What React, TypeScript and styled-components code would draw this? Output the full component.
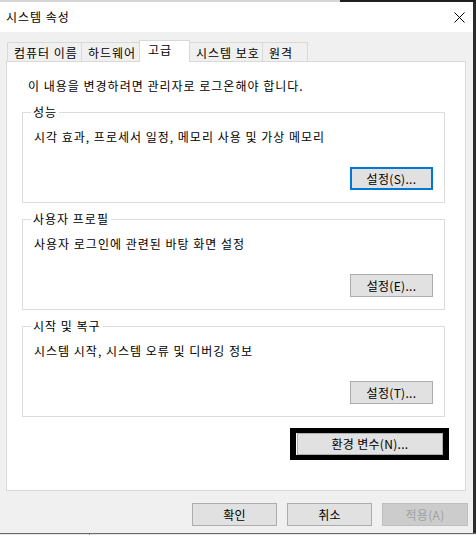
import styled, { createGlobalStyle } from 'styled-components';

const GlobalStyle = createGlobalStyle`
  html, body {
    margin: 0;
    padding: 0;
    background: #2b2b2b;
  }
  body {
    font-family: "Noto Sans CJK KR", "Noto Sans", sans-serif;
    font-size: 12px;
    letter-spacing: 1px;
    color: #000;
  }
  * {
    box-sizing: border-box;
  }
`;

const tabs = [
  { label: '컴퓨터 이름', width: 75 },
  { label: '하드웨어', width: 59 },
  { label: '고급', width: 51, active: true },
  { label: '시스템 보호', width: 74 },
  { label: '원격', width: 46 },
];

const groups = [
  { title: '성능', text: '시각 효과, 프로세서 일정, 메모리 사용 및 가상 메모리', button: '설정(S)...', focused: true },
  { title: '사용자 프로필', text: '사용자 로그인에 관련된 바탕 화면 설정', button: '설정(E)...' },
  { title: '시작 및 복구', text: '시스템 시작, 시스템 오류 및 디버깅 정보', button: '설정(T)...' },
];

const App = () => {
  return (
    <>
      <GlobalStyle />
      <Screen>
        <TopStrip />
        <Middle>
          <Window>
            <TitleBar>
              <span>시스템 속성</span>
              <svg width="11" height="11" viewBox="0 0 11 11">
                <path d="M0.5,0.5 L10.5,10.5 M10.5,0.5 L0.5,10.5" stroke="#000" strokeWidth="1" />
              </svg>
            </TitleBar>
            <Body>
              <TabRow>
                {tabs.map((tab) => (
                  <Tab key={tab.label} $width={tab.width} $active={!!tab.active}>
                    {tab.label}
                  </Tab>
                ))}
              </TabRow>
              <Panel>
                <Notice>이 내용을 변경하려면 관리자로 로그온해야 합니다.</Notice>
                {groups.map((g) => (
                  <Group key={g.title}>
                    <Legend>{g.title}</Legend>
                    <GroupText>{g.text}</GroupText>
                    <GroupFooter>
                      <Button $width={83} $focused={!!g.focused}>{g.button}</Button>
                    </GroupFooter>
                  </Group>
                ))}
                <EnvRow>
                  <EnvFrame>
                    <EnvButton>환경 변수(N)...</EnvButton>
                  </EnvFrame>
                </EnvRow>
              </Panel>
              <Footer>
                <Button $width={85}>확인</Button>
                <Button $width={85}>취소</Button>
                <Button $width={86} disabled>적용(A)</Button>
              </Footer>
            </Body>
          </Window>
          <RightEdge />
        </Middle>
        <BottomStrip />
      </Screen>
    </>
  );
};

const Screen = styled.div`
  width: 476px;
  height: 535px;
  overflow: hidden;
  display: flex;
  flex-direction: column;
  background: #2b2b2b;
`;

const TopStrip = styled.div`
  height: 2px;
  flex: none;
  background: linear-gradient(to right, #d6d6d6 0 340px, #1f1f1f 340px);
`;

const Middle = styled.div`
  display: flex;
  height: 531px;
  flex: none;
`;

const Window = styled.div`
  width: 473px;
  height: 531px;
  display: flex;
  flex-direction: column;
  background: #f0f0f0;
`;

const RightEdge = styled.div`
  flex: 1;
  background: #2b2b2b;
`;

const BottomStrip = styled.div`
  height: 2px;
  flex: none;
  border-top: 1px solid #6a6a6a;
  background: linear-gradient(to right, #e6e6e6 0 89px, #9a9a9a 89px 90px, #e6e6e6 90px);
`;

const TitleBar = styled.div`
  height: 30px;
  flex: none;
  background: #fff;
  display: flex;
  align-items: center;
  justify-content: space-between;
  padding: 0 8px 0 6px;
  line-height: 16px;

  svg {
    display: block;
    margin-top: 1px;
  }
`;

const Body = styled.div`
  flex: 1;
  display: flex;
  flex-direction: column;
  padding: 8px 7px 0 6px;
`;

const TabRow = styled.div`
  display: flex;
  align-items: flex-end;
  height: 22px;
  padding-left: 1px;
  margin-bottom: -1px;
`;

const Tab = styled.div<{ $width: number; $active: boolean }>`
  position: relative;
  width: ${(p) => p.$width}px;
  height: ${(p) => (p.$active ? 22 : 20)}px;
  margin-left: -1px;
  padding: ${(p) => (p.$active ? '1px 0 0 8px' : '2px 0 0 6px')};
  line-height: 16px;
  white-space: nowrap;
  background: ${(p) => (p.$active ? '#fff' : '#f0f0f0')};
  border: 1px solid #d9d9d9;
  border-bottom: ${(p) => (p.$active ? 'none' : '1px solid #d9d9d9')};
  z-index: ${(p) => (p.$active ? 2 : 1)};

  &:first-child {
    margin-left: 0;
  }
`;

const Panel = styled.div`
  height: 430px;
  flex: none;
  background: #fff;
  border: 1px solid #d9d9d9;
  padding: 0 16px 0 15px;
  display: flex;
  flex-direction: column;
`;

const Notice = styled.div`
  margin: 16px 0 10px 6px;
  line-height: 16px;
`;

const Group = styled.fieldset`
  margin: 0 4px 8px 0;
  padding: 0 12px 12px 11px;
  border: 1px solid #dcdcdc;
  min-width: 0;
`;

const Legend = styled.legend`
  margin-left: -3px;
  padding: 0 2px;
  line-height: 16px;
`;

const GroupText = styled.div`
  margin-top: 9px;
  line-height: 16px;
`;

const GroupFooter = styled.div`
  display: flex;
  justify-content: flex-end;
  margin-top: 22px;
  margin-right: -1px;
`;

const Button = styled.button<{ $width: number; $focused?: boolean }>`
  width: ${(p) => p.$width}px;
  height: 23px;
  padding: 0;
  font: inherit;
  letter-spacing: 0.3px;
  line-height: 16px;
  color: #000;
  background: #e1e1e1;
  border: ${(p) => (p.$focused ? '2px solid #0078d7' : '1px solid #adadad')};

  &:disabled {
    color: #a0a0a0;
    background: #cccccc;
    border-color: #bfbfbf;
  }
`;

const EnvRow = styled.div`
  display: flex;
  justify-content: flex-end;
  margin-top: 3px;
`;

const EnvFrame = styled.div`
  width: 159px;
  height: 32px;
  border: 5px solid #000;
  border-left-width: 6px;
  border-right-width: 6px;
  background: #fff;
  padding-left: 1px;
`;

const EnvButton = styled.button`
  display: block;
  width: 146px;
  height: 22px;
  padding: 0;
  font: inherit;
  letter-spacing: 0.3px;
  line-height: 16px;
  color: #000;
  background: #e1e1e1;
  border: 1px solid #adadad;
`;

const Footer = styled.div`
  display: flex;
  justify-content: flex-end;
  gap: 10px;
  padding: 12px 0 0 0;
  margin-right: -2px;
`;

export default App;
